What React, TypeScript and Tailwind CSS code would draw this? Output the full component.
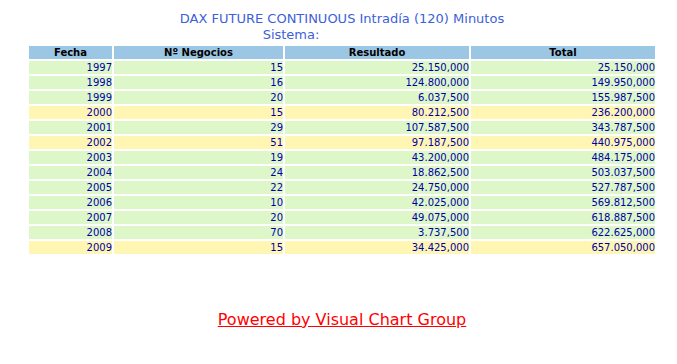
const rows: [string, string, string, string, boolean][] = [
  ["1997", "15", "25.150,000", "25.150,000", false],
  ["1998", "16", "124.800,000", "149.950,000", false],
  ["1999", "20", "6.037,500", "155.987,500", false],
  ["2000", "15", "80.212,500", "236.200,000", true],
  ["2001", "29", "107.587,500", "343.787,500", false],
  ["2002", "51", "97.187,500", "440.975,000", true],
  ["2003", "19", "43.200,000", "484.175,000", false],
  ["2004", "24", "18.862,500", "503.037,500", false],
  ["2005", "22", "24.750,000", "527.787,500", false],
  ["2006", "10", "42.025,000", "569.812,500", false],
  ["2007", "20", "49.075,000", "618.887,500", false],
  ["2008", "70", "3.737,500", "622.625,000", false],
  ["2009", "15", "34.425,000", "657.050,000", true],
];

export default function App() {
  return (
    <div className="w-[677px] h-[364px] bg-white font-['DejaVu_Sans',Verdana,sans-serif]">
      {/* titulo */}
      <div className="ml-[29px] w-[626px] pt-[11px] text-center text-[13px] leading-[16px] text-[#3d5fd9]">
        <div>DAX FUTURE CONTINUOUS Intradía (120) Minutos</div>
        <div className="pr-[102px]">Sistema:</div>
      </div>

      {/* tabla resultados */}
      <table className="ml-[27px] mt-[1px] border-separate border-spacing-[2px] text-[10px] leading-[13px]">
        <thead>
          <tr className="bg-[#9bc6e4] text-black font-bold">
            <th className="w-[83px] h-[13px] p-0 text-center">Fecha</th>
            <th className="w-[169px] h-[13px] p-0 text-center">Nº Negocios</th>
            <th className="w-[184px] h-[13px] p-0 text-center">Resultado</th>
            <th className="w-[184px] h-[13px] p-0 text-center">Total</th>
          </tr>
        </thead>
        <tbody>
          {rows.map(([year, neg, res, total, warn]) => (
            <tr
              key={year}
              className={warn ? "bg-[#fff6b4] text-[#0000a8]" : "bg-[#ddf7c8] text-[#0000a8]"}
            >
              <td className="h-[13px] p-0 text-right">{year}</td>
              <td className="h-[13px] p-0 text-right">{neg}</td>
              <td className="h-[13px] p-0 text-right">{res}</td>
              <td className="h-[13px] p-0 text-right">{total}</td>
            </tr>
          ))}
        </tbody>
      </table>

      <div className="ml-[29px] w-[626px] mt-[54px] text-center text-[16px] leading-[19px]">
        <a href="#" className="text-[#ff0000] underline">
          Powered by Visual Chart Group
        </a>
      </div>
    </div>
  );
}
